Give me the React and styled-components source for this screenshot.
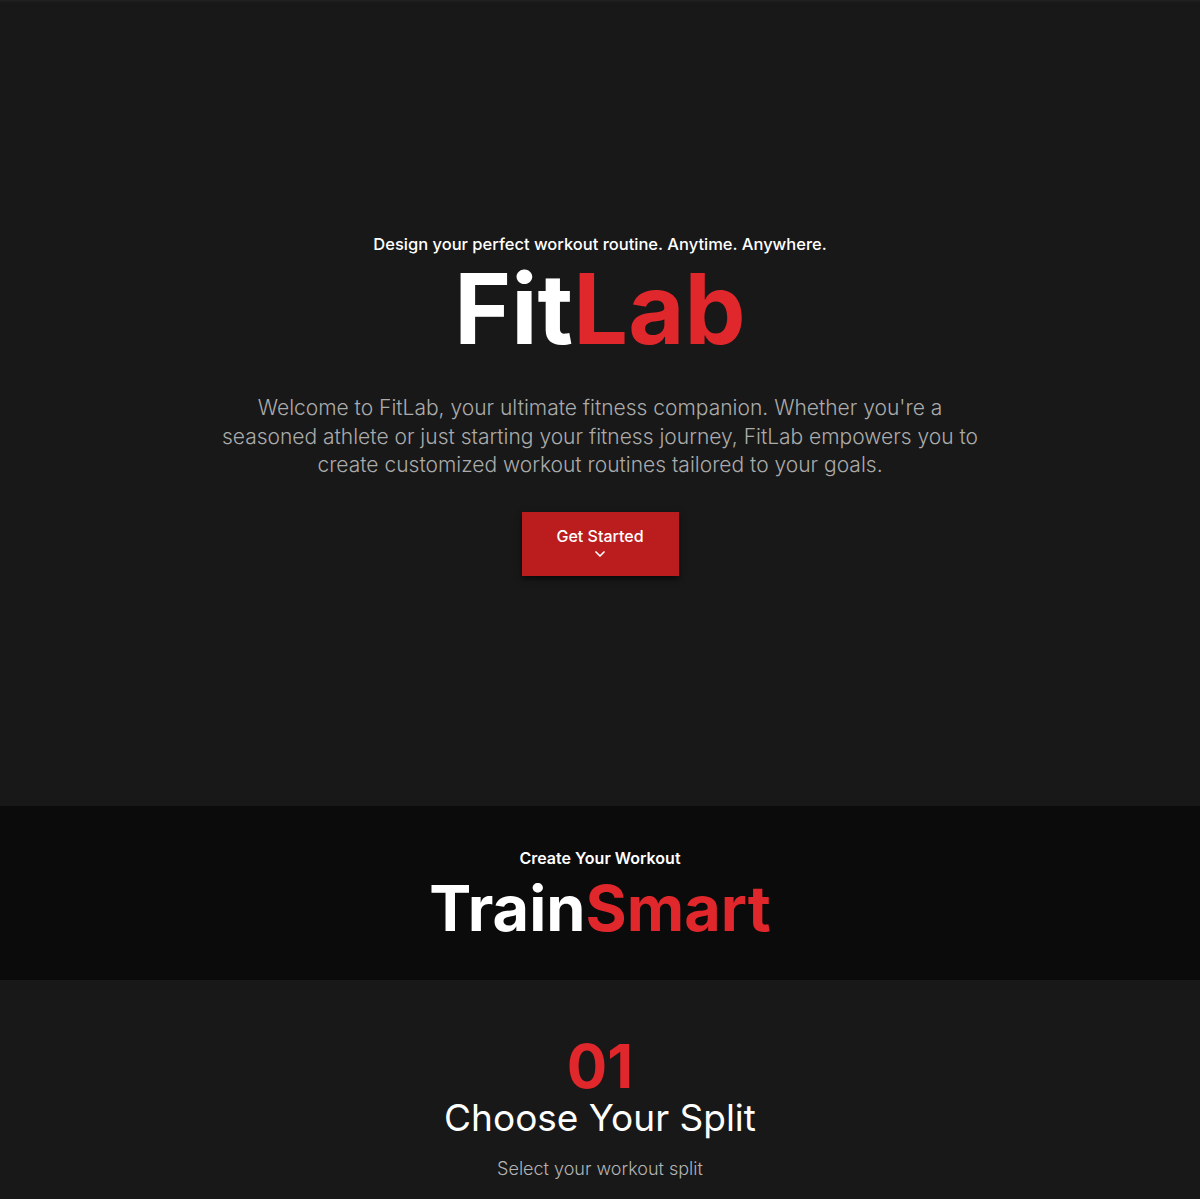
import styled, { createGlobalStyle } from "styled-components"
import { ChevronDown } from "lucide-react"

const GlobalStyle = createGlobalStyle`
    body {
        margin: 0;
        background-color: #181818;
        font-family: "Inter", "Noto Sans", sans-serif;
        color: #ffffff;
    }
`

const Hero = styled.section`
    display: flex;
    flex-direction: column;
    justify-content: center;
    align-items: center;
    height: 806px;
    padding-top: 4px;
    box-sizing: border-box;
    background-color: #181818;
    box-shadow: inset 0 3px 3px -2px #262626;
`

const Tagline = styled.p`
    margin: 0;
    font-size: 16.5px;
    font-weight: 500;
    line-height: 20px;
    color: #ffffff;
`

const Brand = styled.h1`
    margin: ${(p) => p.$margin || "2px 0 0 0"};
    font-size: ${(p) => p.$size || "97px"};
    font-weight: 700;
    line-height: ${(p) => p.$lineHeight || 1.1};
    color: #ffffff;
`

const Red = styled.span`
    color: #e0272b;
`

const Intro = styled.p`
    margin: 31px 0 0 0;
    width: 780px;
    text-align: center;
    font-size: 21px;
    font-weight: 300;
    line-height: 28.5px;
    color: #ababab;
`

const Button = styled.button`
    display: flex;
    flex-direction: column;
    align-items: center;
    margin-top: 32px;
    width: 157px;
    height: 64px;
    padding: 14px 0 0 0;
    border: none;
    background-color: #bb1c1e;
    color: #ffffff;
    font-family: inherit;
    font-size: 16px;
    font-weight: 500;
    box-shadow: 0 3px 6px rgba(0, 0, 0, 0.6);
    cursor: pointer;
`

const Band = styled.section`
    display: flex;
    flex-direction: column;
    align-items: center;
    height: 174px;
    padding-top: 42px;
    box-sizing: border-box;
    background-color: #0b0b0b;
`

const BandLabel = styled.p`
    margin: 0;
    font-size: 16px;
    font-weight: 600;
    line-height: 20px;
    color: #ffffff;
`

const Step = styled.section`
    display: flex;
    flex-direction: column;
    align-items: center;
    padding-top: 56px;
    background-color: #181818;
`

const StepNumber = styled.div`
    font-size: 60px;
    font-weight: 700;
    line-height: 1;
    color: #e0272b;
`

const StepTitle = styled.h2`
    margin: 0;
    font-size: 37px;
    font-weight: 400;
    line-height: 1.2;
    color: #ffffff;
`

const StepText = styled.p`
    margin: 18px 0 0 0;
    font-size: 18px;
    font-weight: 300;
    color: #b3b3b3;
`

const App = () => {
  return (
    <>
      <GlobalStyle />
      <Hero>
        <Tagline>Design your perfect workout routine. Anytime. Anywhere.</Tagline>
        <Brand>Fit<Red>Lab</Red></Brand>
        <Intro>
          Welcome to FitLab, your ultimate fitness companion. Whether you're a seasoned athlete or just starting your fitness journey, FitLab empowers you to create customized workout routines tailored to your goals.
        </Intro>
        <Button>
          Get Started
          <ChevronDown size={16} strokeWidth={2.5} />
        </Button>
      </Hero>
      <Band>
        <BandLabel>Create Your Workout</BandLabel>
        <Brand $size="63px" $margin="9px 0 0 0" $lineHeight={1}>Train<Red>Smart</Red></Brand>
      </Band>
      <Step>
        <StepNumber>01</StepNumber>
        <StepTitle>Choose Your Split</StepTitle>
        <StepText>Select your workout split</StepText>
      </Step>
    </>
  )
}

export default App
